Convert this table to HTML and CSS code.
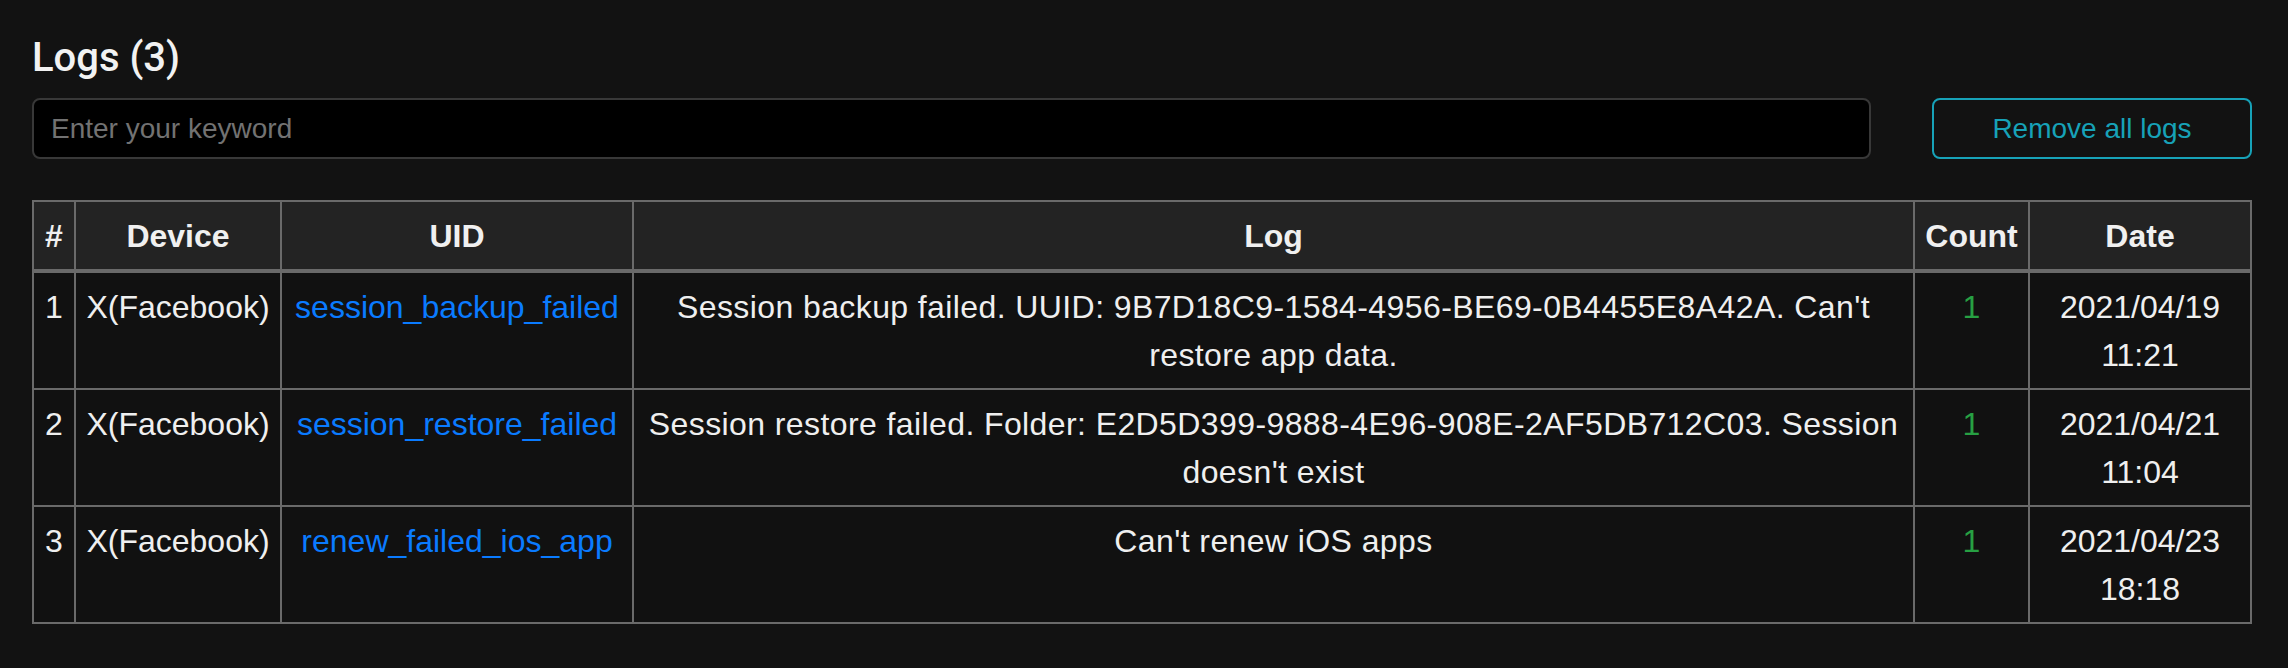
FILE: index.html
```html
<!DOCTYPE html>
<html lang="en">
<head>
<meta charset="utf-8">
<title>Logs</title>
<link rel="stylesheet" href="styles.css">
</head>
<body>
<main class="page">
  <h1 class="title">Logs (3)</h1>
  <div class="toolbar">
    <input class="search" type="text" placeholder="Enter your keyword">
    <button class="btn-remove" type="button">Remove all logs</button>
  </div>
  <table class="logs">
    <colgroup>
      <col class="c-num">
      <col class="c-device">
      <col class="c-uid">
      <col class="c-log">
      <col class="c-count">
      <col class="c-date">
    </colgroup>
    <thead>
      <tr>
        <th>#</th>
        <th>Device</th>
        <th>UID</th>
        <th>Log</th>
        <th>Count</th>
        <th>Date</th>
      </tr>
    </thead>
    <tbody>
      <tr>
        <td>1</td>
        <td>X(Facebook)</td>
        <td><a class="uid" href="#">session_backup_failed</a></td>
        <td class="log">Session backup failed. UUID: 9B7D18C9-1584-4956-BE69-0B4455E8A42A. Can't restore app data.</td>
        <td class="count">1</td>
        <td>2021/04/19 11:21</td>
      </tr>
      <tr>
        <td>2</td>
        <td>X(Facebook)</td>
        <td><a class="uid" href="#">session_restore_failed</a></td>
        <td class="log">Session restore failed. Folder: E2D5D399-9888-4E96-908E-2AF5DB712C03. Session doesn't exist</td>
        <td class="count">1</td>
        <td>2021/04/21 11:04</td>
      </tr>
      <tr>
        <td>3</td>
        <td>X(Facebook)</td>
        <td><a class="uid" href="#">renew_failed_ios_app</a></td>
        <td class="log">Can't renew iOS apps</td>
        <td class="count">1</td>
        <td>2021/04/23 18:18</td>
      </tr>
    </tbody>
  </table>
</main>
</body>
</html>
```
FILE: styles.css
```css
html, body {
  margin: 0;
  padding: 0;
  background: #121212;
}

body {
  font-family: "Liberation Sans", Arial, sans-serif;
  color: #efefef;
}

.page {
  padding: 34px 36px 0 32px;
}

.title {
  margin: 0 0 16px 0;
  font-family: Roboto, "Liberation Sans", Arial, sans-serif;
  font-size: 40px;
  line-height: 48px;
  font-weight: 500;
  color: #f2f2f2;
}

.toolbar {
  display: flex;
  gap: 61px;
  align-items: stretch;
}

.search {
  flex: 1;
  height: 61px;
  box-sizing: border-box;
  background: #000;
  border: 2px solid #383838;
  border-radius: 8px;
  padding: 0 17px;
  font-family: "Liberation Sans", Arial, sans-serif;
  font-size: 28px;
  color: #eee;
  outline: none;
}

.search::placeholder {
  color: #727272;
}

.btn-remove {
  width: 320px;
  height: 61px;
  box-sizing: border-box;
  background: transparent;
  border: 2px solid #17a2b8;
  border-radius: 8px;
  color: #17a2b8;
  font-family: "Liberation Sans", Arial, sans-serif;
  font-size: 28px;
  cursor: pointer;
}

.logs {
  margin-top: 41px;
  width: 2220px;
  table-layout: fixed;
  border-collapse: collapse;
  font-size: 32px;
  line-height: 48px;
}

.c-num { width: 42px; }
.c-device { width: 206px; }
.c-uid { width: 352px; }
.c-log { width: 1281px; }
.c-count { width: 115px; }
.c-date { width: 222px; }

.logs th,
.logs td {
  border: 2px solid #6a6a6a;
  padding: 9.5px 6px;
  text-align: center;
  vertical-align: top;
}

.logs thead th {
  background: #232323;
  font-weight: 700;
  color: #f0f0f0;
  border-bottom-width: 4px;
}

.logs tbody td {
  background: #111111;
}

.logs td.log {
  letter-spacing: 0.4px;
}

.uid {
  color: #0a7bff;
  text-decoration: none;
}

.count {
  color: #27a043;
}
```
